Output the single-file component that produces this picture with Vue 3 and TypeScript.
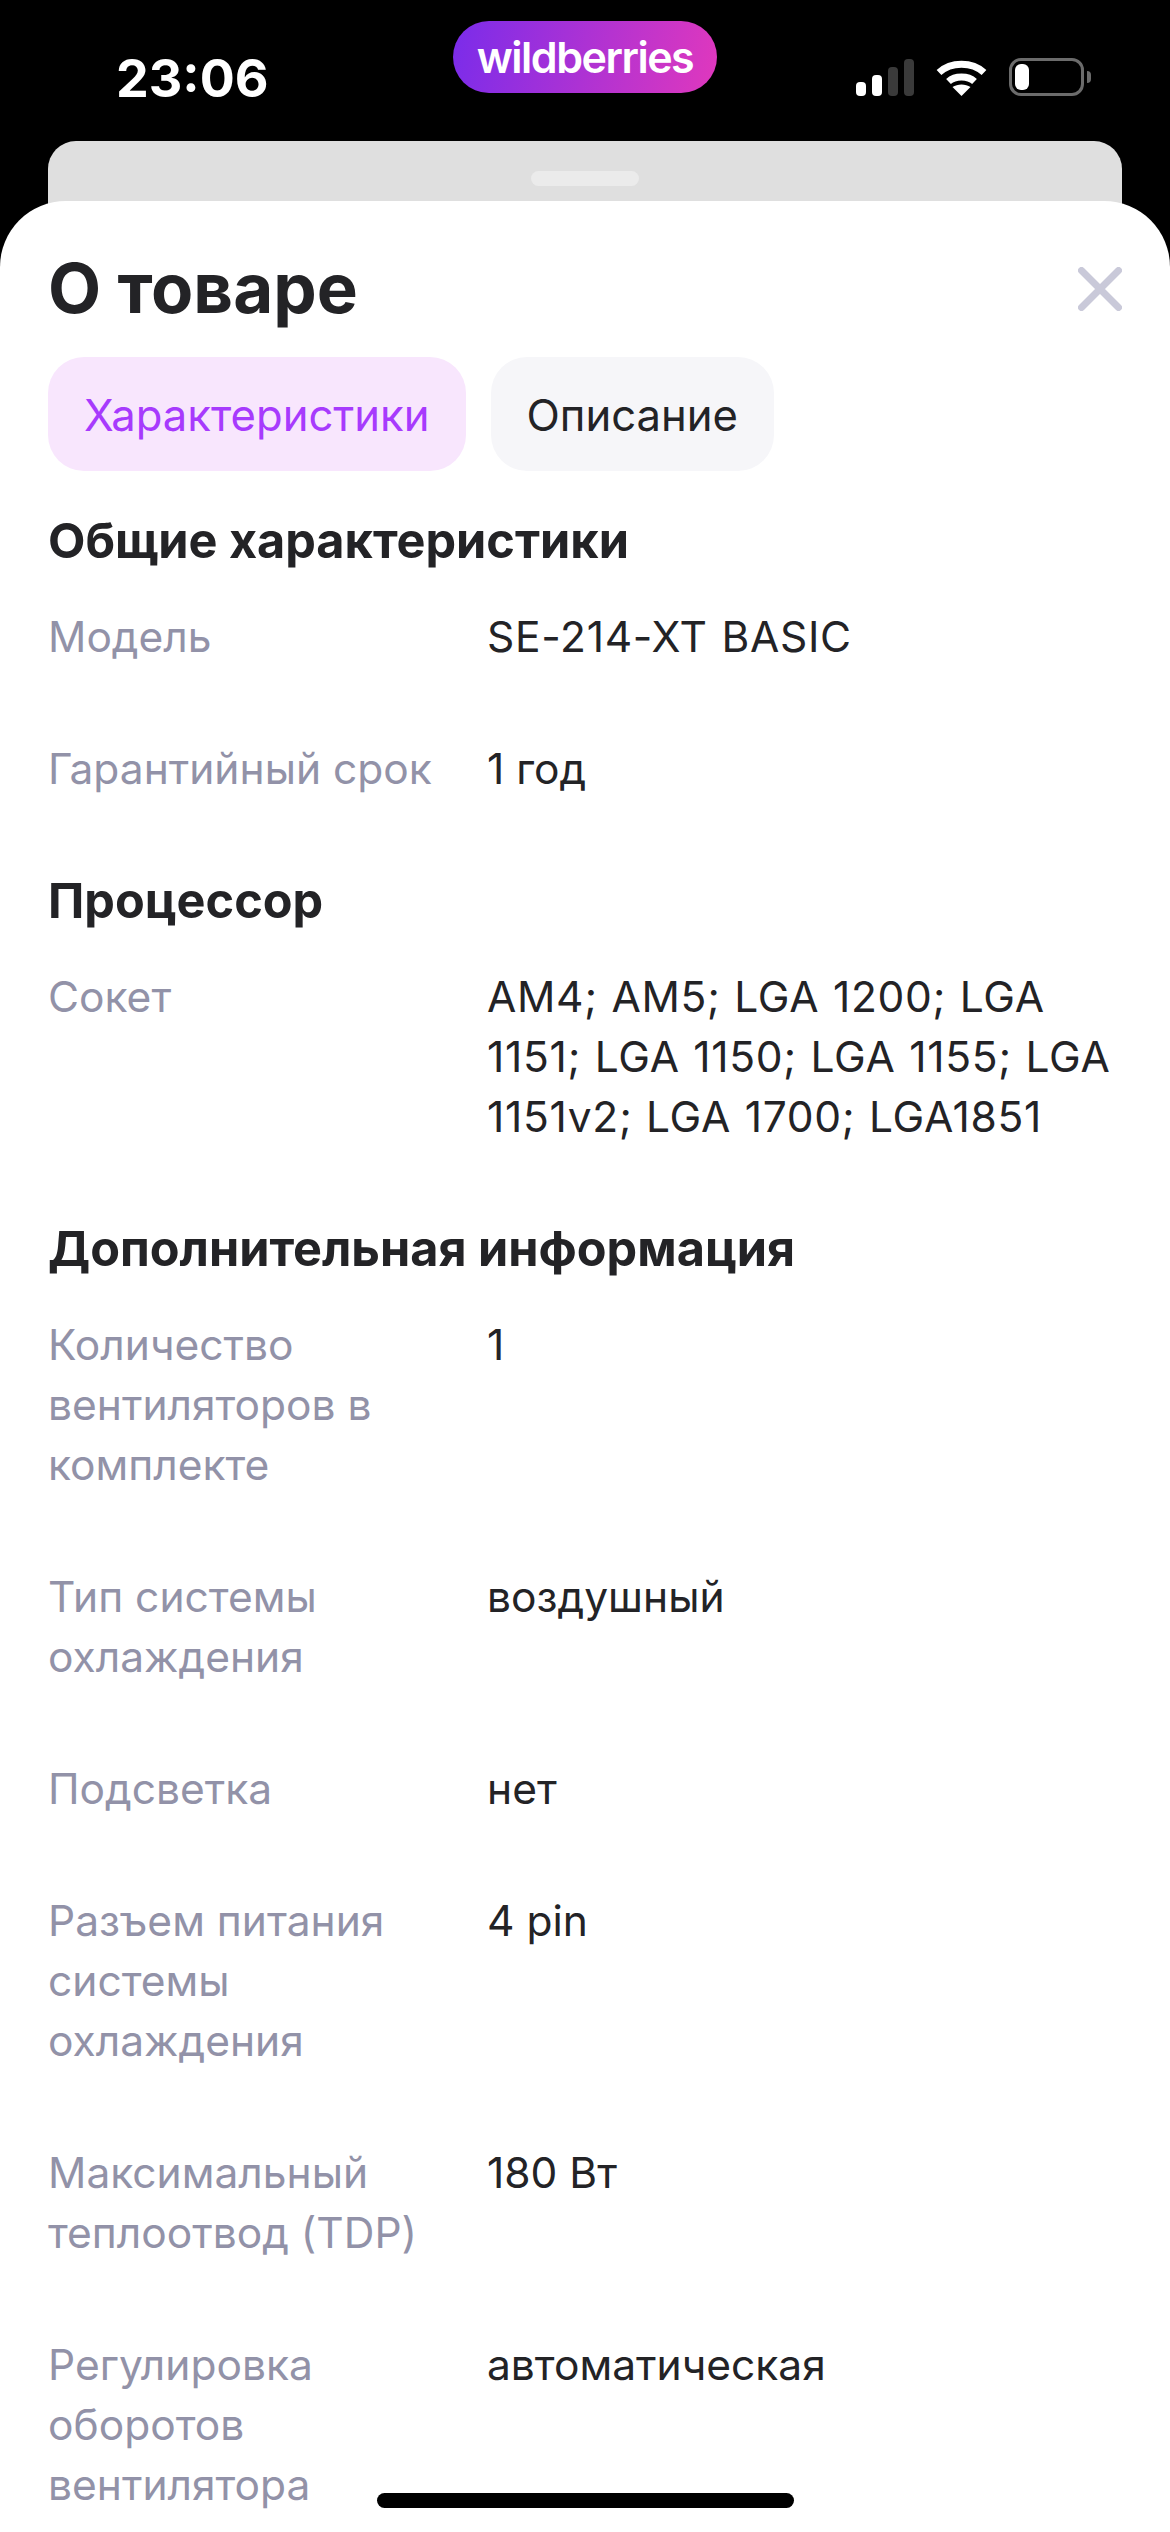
<template>
  <div class="screen">
    <header class="status-bar">
      <span class="time">23:06</span>
      <div class="app-pill"><span class="app-name">wildberries</span></div>
      <div class="status-icons">
        <svg class="signal" width="58" height="37" viewBox="0 0 58 37">
          <rect x="0" y="23" width="10" height="14" rx="4" fill="#fff" />
          <rect x="16" y="16" width="10" height="21" rx="4" fill="#fff" />
          <rect x="32" y="8" width="10" height="29" rx="4" fill="#3a3a3a" />
          <rect x="48" y="0" width="10" height="37" rx="4" fill="#3a3a3a" />
        </svg>
        <svg class="wifi" width="51" height="37" viewBox="0 0 51 37">
          <path d="M3 13.5C15 2.5 36 2.5 48 13.5" fill="none" stroke="#fff" stroke-width="7" />
          <path d="M12.5 22.5C19 16.5 32 16.5 38.5 22.5" fill="none" stroke="#fff" stroke-width="7" />
          <path d="M25.5 37L16.5 28C21.5 24.5 29.5 24.5 34.5 28Z" fill="#fff" />
        </svg>
        <div class="battery">
          <div class="battery-level"></div>
          <div class="battery-nub"></div>
        </div>
      </div>
    </header>

    <div class="sheet-back">
      <div class="handle"></div>
    </div>

    <main class="sheet">
      <div class="sheet-head">
        <h1>О товаре</h1>
        <svg class="close" width="44" height="44" viewBox="0 0 44 44">
          <path d="M3.5 3.5L40.5 40.5M40.5 3.5L3.5 40.5" stroke="#c9c9d9" stroke-width="7" stroke-linecap="round" />
        </svg>
      </div>

      <div class="tabs">
        <button class="tab active">Характеристики</button>
        <button class="tab">Описание</button>
      </div>

      <section v-for="group in groups" :key="group.title" class="group">
        <h2>{{ group.title }}</h2>
        <div v-for="row in group.rows" :key="row.label" class="row">
          <div class="label">{{ row.label }}</div>
          <div class="value" :class="{ latin: row.latin }">{{ row.value }}</div>
        </div>
      </section>
    </main>

    <div class="home-indicator"></div>
  </div>
</template>

<script setup lang="ts">
interface SpecRow {
  label: string
  value: string
  latin?: boolean
}

interface SpecGroup {
  title: string
  rows: SpecRow[]
}

const groups: SpecGroup[] = [
  {
    title: 'Общие характеристики',
    rows: [
      { label: 'Модель', value: 'SE-214-XT BASIC', latin: true },
      { label: 'Гарантийный срок', value: '1 год' },
    ],
  },
  {
    title: 'Процессор',
    rows: [
      {
        label: 'Сокет',
        value: 'AM4; AM5; LGA 1200; LGA 1151; LGA 1150; LGA 1155; LGA 1151v2; LGA 1700; LGA1851',
        latin: true,
      },
    ],
  },
  {
    title: 'Дополнительная информация',
    rows: [
      { label: 'Количество вентиляторов в комплекте', value: '1' },
      { label: 'Тип системы охлаждения', value: 'воздушный' },
      { label: 'Подсветка', value: 'нет' },
      { label: 'Разъем питания системы охлаждения', value: '4 pin' },
      { label: 'Максимальный теплоотвод (TDP)', value: '180 Вт' },
      { label: 'Регулировка оборотов вентилятора', value: 'автоматическая' },
    ],
  },
]
</script>

<style scoped>
.screen {
  position: relative;
  width: 1170px;
  height: 2532px;
  overflow: hidden;
  background: #000;
  font-family: Inter, "Noto Sans", sans-serif;
}

.status-bar {
  position: relative;
  height: 141px;
  display: flex;
  align-items: flex-start;
}

.time {
  margin: 50px 0 0 116px;
  font-size: 52px;
  line-height: 58px;
  font-weight: 700;
  color: #fff;
}

.app-pill {
  position: absolute;
  left: 453px;
  top: 21px;
  width: 264px;
  height: 72px;
  border-radius: 36px;
  display: flex;
  align-items: center;
  justify-content: center;
  background: linear-gradient(100deg, #7a2cea 0%, #e038bd 100%);
}

.app-name {
  font-size: 43px;
  line-height: 50px;
  font-weight: 600;
  letter-spacing: -1.5px;
  color: #fff;
}

.status-icons {
  position: absolute;
  left: 856px;
  top: 59px;
  display: flex;
  align-items: flex-start;
}

.wifi {
  margin-left: 22px;
}

.battery {
  position: relative;
  width: 75px;
  height: 38px;
  margin: -1px 0 0 22px;
  border: 3px solid #6b6b6b;
  border-radius: 12px;
  box-sizing: border-box;
}

.battery-level {
  width: 14px;
  height: 26px;
  margin: 3px 0 0 3px;
  border-radius: 6px;
  background: #fff;
}

.battery-nub {
  position: absolute;
  right: -10px;
  top: 10px;
  width: 4px;
  height: 12px;
  border-radius: 0 4px 4px 0;
  background: #6b6b6b;
}

.sheet-back {
  height: 120px;
  margin: 0 48px;
  border-radius: 28px 28px 0 0;
  background: #dfdfdf;
}

.handle {
  width: 108px;
  height: 15px;
  margin: 0 auto;
  position: relative;
  top: 30px;
  border-radius: 8px;
  background: #ebebeb;
}

.sheet {
  position: absolute;
  left: 0;
  right: 0;
  top: 201px;
  bottom: 0;
  padding: 0 48px;
  border-radius: 66px 66px 0 0;
  background: #fff;
  color: #232326;
}

.sheet-head {
  display: flex;
  align-items: center;
  justify-content: space-between;
  height: 156px;
  padding-top: 20px;
  box-sizing: border-box;
}

.sheet-head h1 {
  margin: 0 0 3px;
  font-size: 69px;
  line-height: 84px;
  font-weight: 700;
}

.tabs {
  display: flex;
  gap: 25px;
}

.tab {
  height: 114px;
  padding: 2px 36px 0;
  border: none;
  border-radius: 36px;
  font-family: inherit;
  font-size: 43.6px;
  color: #232326;
  background: #f6f6f9;
}

.tab.active {
  color: #a73afd;
  background: #f8e6fd;
}

.group {
  margin-top: 74px;
}

.tabs + .group {
  margin-top: 42px;
}

.group h2 {
  margin: 0 0 38px;
  font-size: 48.6px;
  line-height: 56px;
  font-weight: 700;
}

.row {
  display: grid;
  grid-template-columns: 420px 1fr;
  column-gap: 19px;
  margin-bottom: 72px;
  font-size: 42.5px;
  line-height: 60px;
}

.row:last-child {
  margin-bottom: 0;
}

.label {
  color: #9292a8;
}

.value.latin {
  letter-spacing: 0.7px;
  word-spacing: 1px;
}

.home-indicator {
  position: absolute;
  left: 377px;
  top: 2493px;
  width: 417px;
  height: 15px;
  border-radius: 8px;
  background: #000;
}
</style>
